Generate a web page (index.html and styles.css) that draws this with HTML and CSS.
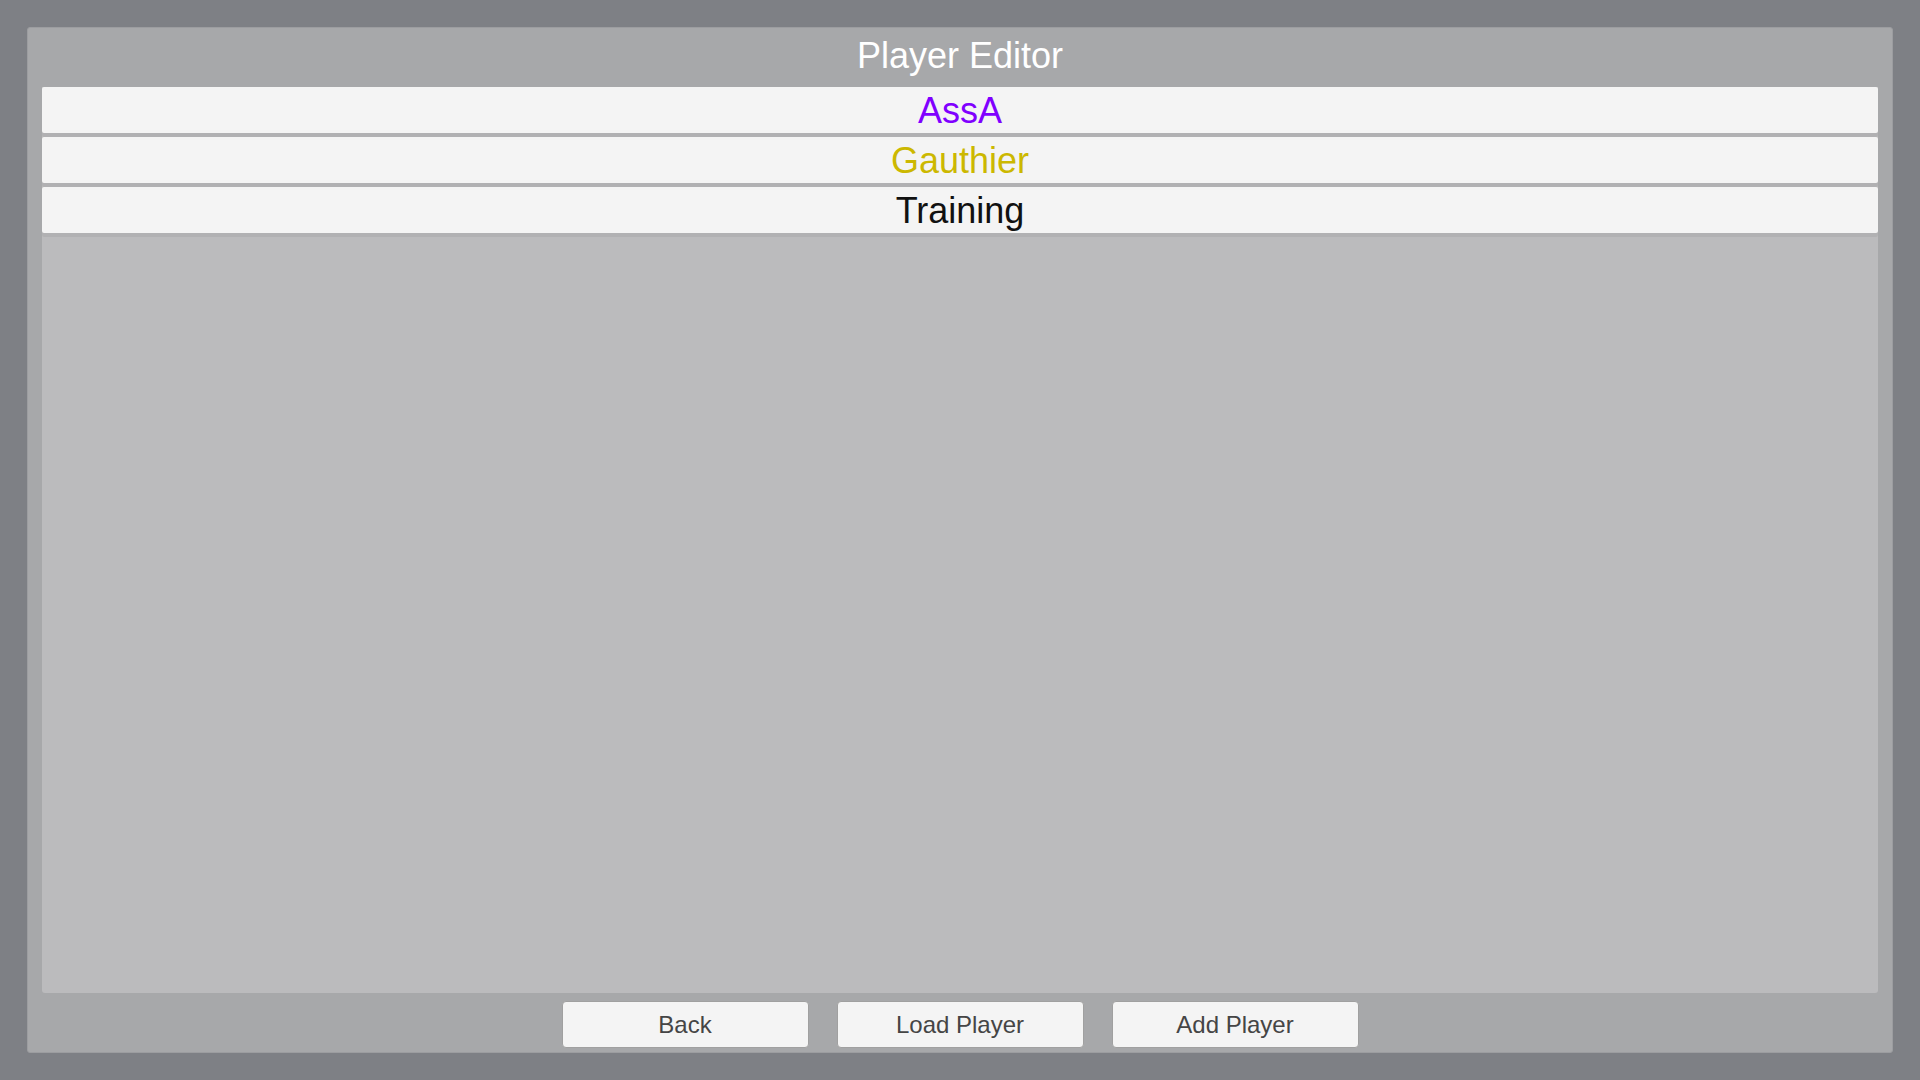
FILE: index.html
```html
<!DOCTYPE html>
<html>
<head>
<meta charset="utf-8">
<title>Player Editor</title>
<link rel="stylesheet" href="styles.css">
</head>
<body>
<div class="screen">
  <div class="panel">
    <div class="title">Player Editor</div>
    <div class="list">
      <div class="item item-purple">AssA</div>
      <div class="item item-yellow">Gauthier</div>
      <div class="item item-black">Training</div>
    </div>
    <div class="actions">
      <button class="btn">Back</button>
      <button class="btn">Load Player</button>
      <button class="btn">Add Player</button>
    </div>
  </div>
</div>
</body>
</html>
```
FILE: styles.css
```css
html, body {
  margin: 0;
  padding: 0;
  width: 1920px;
  height: 1080px;
  background: #7e8085;
  font-family: "Liberation Sans", Arial, sans-serif;
  overflow: hidden;
}
.screen {
  box-sizing: border-box;
  width: 1920px;
  height: 1080px;
  padding: 27px 27px 27px 27px;
  display: flex;
}
.panel {
  flex: 1;
  box-sizing: border-box;
  background: #a7a8aa;
  border: 1px solid #9c9da0;
  border-radius: 3px;
  padding: 0 14px 4px 14px;
  display: flex;
  flex-direction: column;
}
.title {
  color: #ffffff;
  font-size: 36px;
  line-height: 40px;
  text-align: center;
  padding-top: 8px;
  margin-bottom: 11px;
}
.list {
  flex: 1;
  background: #bbbbbd;
  border-radius: 0 0 3px 3px;
  display: flex;
  flex-direction: column;
  gap: 4px;
}
.item {
  box-sizing: border-box;
  height: 46px;
  padding-top: 1px;
  line-height: 45px;
  background: #f4f4f4;
  text-align: center;
  font-size: 36px;
  border-radius: 2px;
  box-shadow: 0 4px 0 #b1b1b3;
}
.item-purple { color: #8000ff; }
.item-yellow { color: #ccb800; }
.item-black { color: #111111; }
.actions {
  display: flex;
  justify-content: center;
  gap: 28px;
  padding-top: 8px;
}
.btn {
  box-sizing: border-box;
  width: 247px;
  height: 47px;
  background: #f4f4f4;
  border: 1px solid #a0a0a0;
  border-radius: 4px;
  font-family: "Liberation Sans", Arial, sans-serif;
  font-size: 24px;
  color: #454545;
  padding: 0;
}
```
